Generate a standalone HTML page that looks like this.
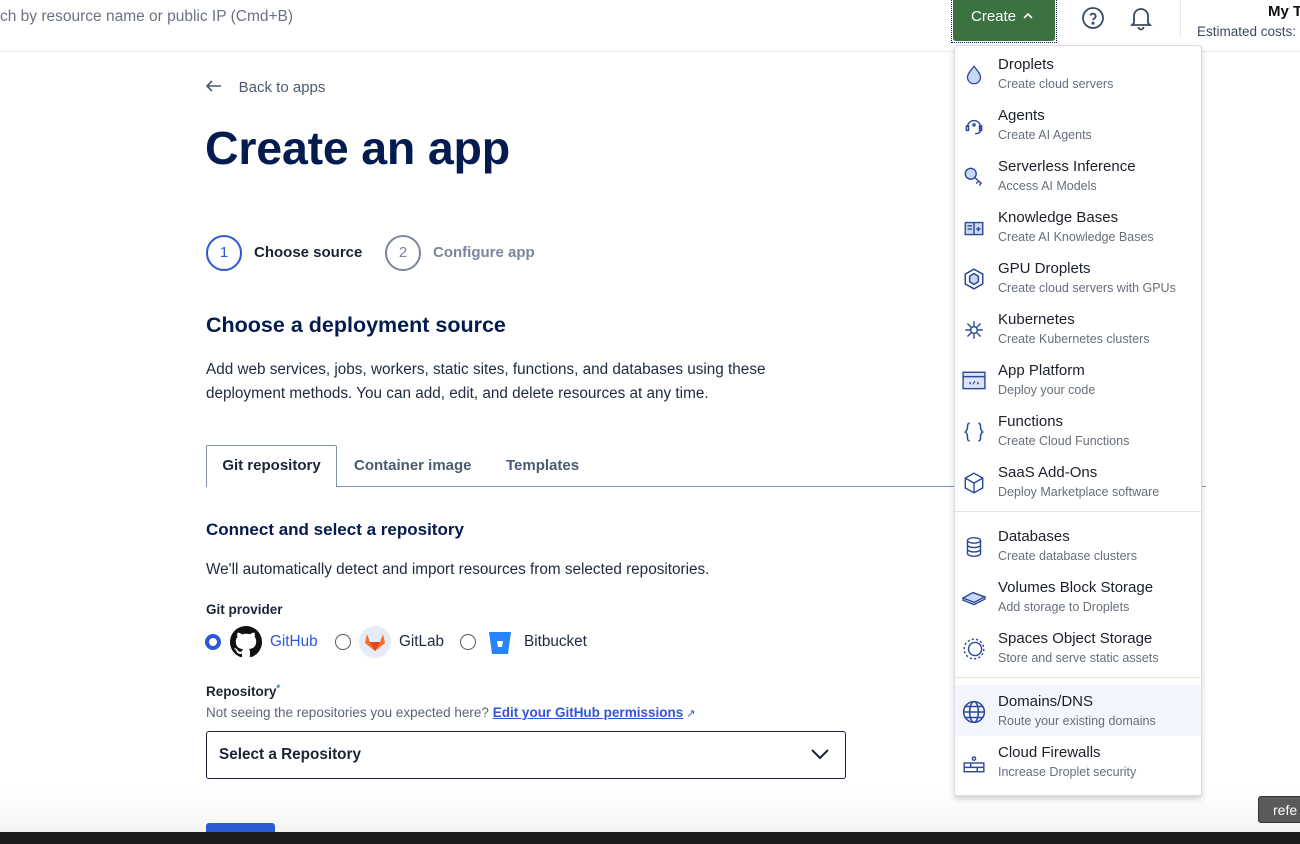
<!DOCTYPE html>
<html><head><meta charset="utf-8"><style>
*{box-sizing:border-box;margin:0;padding:0}
body{width:1300px;height:844px;overflow:hidden;background:#fff;font-family:"Liberation Sans",sans-serif;color:#031b4e;position:relative}
.hdr{position:absolute;left:0;top:0;width:1300px;height:52px;border-bottom:1px solid #e5e8ed;background:#fff}
.abs{position:absolute;white-space:nowrap}
.menu{position:absolute;left:954px;top:45px;width:248px;height:751px;background:#fff;border:1px solid #d9dde4;border-radius:3px;box-shadow:0 3px 6px rgba(0,0,0,.18)}
.it{position:absolute;left:0;width:246px;height:51px}
.it .t{position:absolute;left:43px;top:8px;font-size:15px;color:#1b1f2b}
.it .s{position:absolute;left:43px;top:29px;font-size:12.5px;color:#676f7c}
.it svg{position:absolute;left:7px;top:15px}
.sep{position:absolute;left:0;width:246px;height:1px;background:#dfe2e7}
</style></head><body>
<div class="hdr"></div>
<div class="abs" style="left:0;top:8px;font-size:15.5px;color:#6b7280">ch by resource name or public IP (Cmd+B)</div>
<div class="abs" style="left:951px;top:-2px;width:106px;height:45px;border:1px dotted #031b4e;"></div>
<div class="abs" style="left:953px;top:0;width:102px;height:41px;background:#3a7241;border-radius:0 0 3px 3px;color:#fff;font-size:15px;line-height:34px;padding-left:18px">Create <svg width="10" height="8" viewBox="0 0 10 8" fill="none" stroke="#fff" stroke-width="1.6" style="vertical-align:1px;margin-left:3px"><path d="M1 6l4-4 4 4"/></svg></div>
<svg class="abs" style="left:1081px;top:6px" width="24" height="24" viewBox="0 0 24 24" fill="none" stroke="#3b4a63" stroke-width="1.8"><circle cx="12" cy="12" r="10"/><path d="M9.3 9.5a2.8 2.8 0 0 1 5.4 1c0 1.8-2.7 2.2-2.7 3.7"/><circle cx="12" cy="17.3" r=".6" fill="#3b4a63"/></svg>
<svg class="abs" style="left:1129px;top:5px" width="24" height="26" viewBox="0 0 24 26" fill="none" stroke="#3b4a63" stroke-width="1.8"><path d="M5 18V11a7 7 0 0 1 14 0v7l2 2H3z"/><path d="M9.5 22a2.5 2.5 0 0 0 5 0"/></svg>
<div class="abs" style="left:1180px;top:0;width:1px;height:37px;background:#e2e5ea"></div>
<div class="abs" style="left:1268px;top:3px;font-size:15px;font-weight:bold;color:#111">My T</div>
<div class="abs" style="left:1197px;top:24px;font-size:13.5px;color:#3e4a5c">Estimated costs:</div>

<div class="abs" style="left:206px;top:79px;font-size:15px;color:#4b5a72"><svg width="16" height="12" viewBox="0 0 16 12" fill="none" stroke="#4b5a72" stroke-width="1.6" style="vertical-align:0"><path d="M15 6H2M6 1L1 6l5 5"/></svg>&nbsp;&nbsp;&nbsp;&nbsp;Back to apps</div>
<div class="abs" style="left:205px;top:121px;font-size:46.5px;font-weight:bold;color:#031b4e;letter-spacing:-.2px">Create an app</div>
<div class="abs" style="left:206px;top:235px;width:36px;height:36px;border:2px solid #2b59d8;border-radius:50%;text-align:center;line-height:32px;font-size:15px;color:#2b59d8">1</div>
<div class="abs" style="left:254px;top:244px;font-size:15px;font-weight:bold;color:#1b2437">Choose source</div>
<div class="abs" style="left:385px;top:235px;width:36px;height:36px;border:2px solid #7b869e;border-radius:50%;text-align:center;line-height:32px;font-size:15px;color:#7b869e">2</div>
<div class="abs" style="left:433px;top:244px;font-size:15px;font-weight:bold;color:#7b869e">Configure app</div>
<div class="abs" style="left:206px;top:313px;font-size:21.5px;font-weight:bold;color:#031b4e">Choose a deployment source</div>
<div class="abs" style="left:206px;top:358px;font-size:15.3px;line-height:24px;color:#1f2a40">Add web services, jobs, workers, static sites, functions, and databases using these<br>deployment methods. You can add, edit, and delete resources at any time.</div>
<div class="abs" style="left:206px;top:486px;width:1000px;height:1px;background:#8390aa"></div>
<div class="abs" style="left:206px;top:445px;width:131px;height:42px;border:1px solid #8390aa;border-bottom:none;background:#fff;border-radius:2px 2px 0 0;font-size:15px;font-weight:bold;color:#1b2437;text-align:center;line-height:40px">Git repository</div>
<div class="abs" style="left:354px;top:457px;font-size:15px;font-weight:bold;color:#4b5a72">Container image</div>
<div class="abs" style="left:506px;top:457px;font-size:15px;font-weight:bold;color:#4b5a72">Templates</div>
<div class="abs" style="left:206px;top:520px;font-size:17px;font-weight:bold;color:#031b4e">Connect and select a repository</div>
<div class="abs" style="left:206px;top:561px;font-size:15.3px;color:#1f2a40">We'll automatically detect and import resources from selected repositories.</div>
<div class="abs" style="left:206px;top:602px;font-size:13.5px;font-weight:bold;color:#1b2437">Git provider</div>
<div class="abs" style="left:205px;top:634px;width:16px;height:16px;border:4.5px solid #2b59d8;border-radius:50%"></div>
<svg class="abs" style="left:230px;top:626px" width="32" height="32" viewBox="0 0 16 16"><path fill="#111" d="M8 0C3.58 0 0 3.58 0 8c0 3.54 2.290 6.53 5.47 7.59.4.07.55-.17.55-.38v-1.33c-2.23.48-2.7-1.07-2.7-1.070-.36-.92-.89-1.17-.89-1.17-.73-.5.05-.49.05-.49.8.06 1.23.83 1.230.83.72 1.22 1.87.87 2.33.66.07-.52.28-.87.51-1.07-1.78-.2-3.64-.89-3.64-3.95 0-.87.31-1.59.82-2.15-.08-.2-.36-1.02.08-2.12 0 0 .67-.21 2.2.82A7.7 7.7 0 0 1 8 3.86c.68 0 1.36.09 2 .27 1.53-1.04 2.2-.82 2.2-.82.44 1.1.16 1.92.08 2.12.51.56.82 1.27.82 2.15 0 3.07-1.87 3.75-3.65 3.95.29.25.54.73.54 1.48v2.2c0 .21.15.46.55.38A8 8 0 0 0 16 8c0-4.42-3.58-8-8-8z"/></svg>
<div class="abs" style="left:270px;top:633px;font-size:15.3px;color:#2b59d8">GitHub</div>
<div class="abs" style="left:335px;top:634px;width:16px;height:16px;border:1px solid #555;border-radius:50%"></div>
<div class="abs" style="left:359px;top:626px;width:32px;height:32px;border-radius:50%;background:#e6ecf7"></div>
<svg class="abs" style="left:364px;top:632px" width="22" height="20" viewBox="0 0 22 20"><path d="M11 19L1 11l2-9 3 8h10l3-8 2 9z" fill="#fc6d26"/><path d="M11 19L6 10h10z" fill="#e24329"/></svg>
<div class="abs" style="left:399px;top:633px;font-size:15.3px;color:#1f2a40">GitLab</div>
<div class="abs" style="left:460px;top:634px;width:16px;height:16px;border:1px solid #555;border-radius:50%"></div>
<svg class="abs" style="left:488px;top:631px" width="24" height="24" viewBox="0 0 24 24"><path d="M1 1h22l-3 22H4z" fill="#2684ff"/><path d="M9 10h6l-1 6h-4z" fill="#fff"/></svg>
<div class="abs" style="left:524px;top:633px;font-size:15.3px;color:#1f2a40">Bitbucket</div>
<div class="abs" style="left:206px;top:683px;font-size:13.5px;font-weight:bold;color:#1b2437">Repository<span style="color:#2b59d8;font-size:9px;vertical-align:5px">*</span></div>
<div class="abs" style="left:206px;top:705px;font-size:13.5px;color:#5b6578">Not seeing the repositories you expected here? <span style="color:#2b59d8;font-weight:bold;text-decoration:underline">Edit your GitHub permissions</span><span style="color:#2b59d8;font-size:11px"> &#8599;</span></div>
<div class="abs" style="left:206px;top:731px;width:640px;height:48px;border:1px solid #1b2437;border-radius:3px"></div>
<div class="abs" style="left:219px;top:746px;font-size:15.3px;font-weight:bold;color:#1b2437">Select a Repository</div>
<svg class="abs" style="left:810px;top:747px" width="20" height="14" viewBox="0 0 20 14" fill="none" stroke="#1b2437" stroke-width="2"><path d="M2 3l8 8 8-8"/></svg>
<div class="abs" style="left:0;top:790px;width:1300px;height:42px;background:linear-gradient(#fff,#f4f4f4)"></div>
<div class="abs" style="left:206px;top:823px;width:69px;height:12px;background:#2b59d8;border-radius:3px 3px 0 0"></div>
<div class="abs" style="left:1258px;top:796px;width:50px;height:27px;background:#5a5a5a;border:1px solid #333;border-radius:3px;color:#fff;font-size:14px;padding:5px 0 0 14px">refe</div>
<div class="abs" style="left:0;top:832px;width:1300px;height:12px;background:#1c1c1c"></div>

<div class="menu">
<div class="it" style="top:2px"><svg width="24" height="24" viewBox="0 0 22 22"><path d="M11 3C8 7 5 10 5 13a6 6 0 0 0 12 0c0-3-3-6-6-10z" fill="#c9d8f4" stroke="#2d4a9a" stroke-width="1.2"/></svg><div class="t">Droplets</div><div class="s">Create cloud servers</div></div>
<div class="it" style="top:53px"><svg width="24" height="24" viewBox="0 0 22 22" fill="none" stroke="#2d4a9a" stroke-width="1.3"><path d="M5 12a6 6 0 0 1 12 0v2M4 11h2v4H4zM16 11h2v4h-2zM17 15c0 2-2 3-5 3"/><circle cx="11" cy="10" r="1"/></svg><div class="t">Agents</div><div class="s">Create AI Agents</div></div>
<div class="it" style="top:104px"><svg width="24" height="24" viewBox="0 0 22 22" fill="none" stroke="#2d4a9a" stroke-width="1.3"><circle cx="8" cy="8" r="5" fill="#c9d8f4"/><path d="M11 11l7 6M15 15l-2 2M17 17l-1 2"/></svg><div class="t">Serverless Inference</div><div class="s">Access AI Models</div></div>
<div class="it" style="top:155px"><svg width="24" height="24" viewBox="0 0 22 22" fill="none" stroke="#2d4a9a" stroke-width="1.3"><path d="M3 6h8v11H3zM11 6h8v11h-8z" fill="#c9d8f4"/><path d="M5 9h4M5 12h4M15 10v4M13 12h4"/></svg><div class="t">Knowledge Bases</div><div class="s">Create AI Knowledge Bases</div></div>
<div class="it" style="top:206px"><svg width="24" height="24" viewBox="0 0 22 22" fill="none" stroke="#2d4a9a" stroke-width="1.4"><path d="M11 2l8 4.5v9L11 20l-8-4.5v-9z"/><path d="M11 6l4 2.5v5L11 16l-4-2.5v-5z" fill="#c9d8f4"/></svg><div class="t">GPU Droplets</div><div class="s">Create cloud servers with GPUs</div></div>
<div class="it" style="top:257px"><svg width="24" height="24" viewBox="0 0 22 22" fill="none" stroke="#2d4a9a" stroke-width="1.3"><circle cx="11" cy="11" r="3"/><path d="M11 8V3M11 14v5M8 11H3M14 11h5M9 9L5 5M13 13l4 4M13 9l4-4M9 13l-4 4"/></svg><div class="t">Kubernetes</div><div class="s">Create Kubernetes clusters</div></div>
<div class="it" style="top:308px"><svg width="24" height="24" viewBox="0 0 22 22" fill="none" stroke="#2d4a9a" stroke-width="1.3"><rect x="1" y="3" width="20" height="15" fill="#dbe5f7"/><path d="M1 7h20"/><path d="M8 12l-1 1 1 1M14 12l1 1-1 1M10 14l2-3" stroke-width="1"/></svg><div class="t">App Platform</div><div class="s">Deploy your code</div></div>
<div class="it" style="top:359px"><svg width="24" height="24" viewBox="0 0 22 22" fill="none" stroke="#2d4a9a" stroke-width="1.4"><path d="M7 3c-2 0-2 2-2 4s-2 4-2 4 2 1 2 4 0 4 2 4M15 3c2 0 2 2 2 4s2 4 2 4-2 1-2 4 0 4-2 4"/></svg><div class="t">Functions</div><div class="s">Create Cloud Functions</div></div>
<div class="it" style="top:410px"><svg width="24" height="24" viewBox="0 0 22 22" fill="none" stroke="#2d4a9a" stroke-width="1.3"><path d="M11 2l8 4.5v9L11 20l-8-4.5v-9zM3 6.5l8 4.5 8-4.5M11 11v9"/></svg><div class="t">SaaS Add-Ons</div><div class="s">Deploy Marketplace software</div></div>
<div class="sep" style="top:465px"></div>
<div class="it" style="top:474px"><svg width="24" height="24" viewBox="0 0 22 22" fill="none" stroke="#2d4a9a" stroke-width="1.3"><ellipse cx="11" cy="5" rx="6" ry="2.5"/><path d="M5 5v12c0 1.5 3 2.5 6 2.5s6-1 6-2.5V5M5 9c0 1.5 3 2.5 6 2.5s6-1 6-2.5M5 13c0 1.5 3 2.5 6 2.5s6-1 6-2.5"/></svg><div class="t">Databases</div><div class="s">Create database clusters</div></div>
<div class="it" style="top:525px"><svg width="24" height="24" viewBox="0 0 22 22" fill="none" stroke="#2d4a9a" stroke-width="1.3"><path d="M1 11l9-5 11 4-10 5z" fill="#c9d8f4"/><path d="M1 11v2l10 4 10-5v-2"/></svg><div class="t">Volumes Block Storage</div><div class="s">Add storage to Droplets</div></div>
<div class="it" style="top:576px"><svg width="24" height="24" viewBox="0 0 22 22" fill="none" stroke="#2d4a9a" stroke-width="1.3"><circle cx="11" cy="11" r="9" stroke-dasharray="2 2"/><circle cx="12" cy="11" r="6"/></svg><div class="t">Spaces Object Storage</div><div class="s">Store and serve static assets</div></div>
<div class="sep" style="top:631px"></div>
<div class="it" style="top:639px;background:#f3f6fd"><svg width="24" height="24" viewBox="0 0 22 22" fill="none" stroke="#2d4a9a" stroke-width="1.4"><circle cx="11" cy="11" r="9.5"/><ellipse cx="11" cy="11" rx="4" ry="9.5"/><path d="M1.5 11h19M3 6h16M3 16h16"/></svg><div class="t">Domains/DNS</div><div class="s">Route your existing domains</div></div>
<div class="it" style="top:690px"><svg width="24" height="24" viewBox="0 0 22 22" fill="none" stroke="#2d4a9a" stroke-width="1.3"><circle cx="11" cy="7" r="1.5"/><rect x="2" y="11" width="18" height="8"/><path d="M2 15h18M8 11v4M14 15v4"/></svg><div class="t">Cloud Firewalls</div><div class="s">Increase Droplet security</div></div>
</div>
</body></html>
